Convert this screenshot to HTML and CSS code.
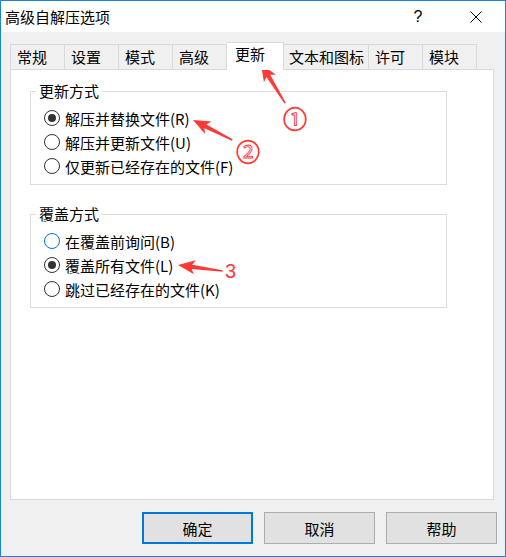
FILE: index.html
```html
<!DOCTYPE html>
<html lang="zh-CN">
<head>
  <meta charset="utf-8" />
  <title>高级自解压选项</title>
  <link rel="stylesheet" href="styles.css">
</head>
<body>

  <div class="window">
    <div class="titlebar">
      <span class="title">高级自解压选项</span>
      <span class="tb-btn">?</span>
      <span class="tb-btn">
        <svg width="12" height="12" viewBox="0 0 12 12"><path d="M0.5 0.5 L11.5 11.5 M11.5 0.5 L0.5 11.5" stroke="#000" stroke-width="1" fill="none"/></svg>
      </span>
    </div>

    <div class="dialog">
      <div class="tabs">
        <div class="tab first">常规</div>
        <div class="tab">设置</div>
        <div class="tab">模式</div>
        <div class="tab">高级</div>
        <div class="tab active">更新</div>
        <div class="tab wide">文本和图标</div>
        <div class="tab">许可</div>
        <div class="tab">模块</div>
      </div>

      <div class="panel">
        <div class="group">
          <div class="legend">更新方式</div>
          <div class="radio-row"><span class="radio checked"></span>解压并替换文件(R)</div>
          <div class="radio-row"><span class="radio"></span>解压并更新文件(U)</div>
          <div class="radio-row"><span class="radio"></span>仅更新已经存在的文件(F)</div>
        </div>

        <div class="group second">
          <div class="legend">覆盖方式</div>
          <div class="radio-row"><span class="radio focus"></span>在覆盖前询问(B)</div>
          <div class="radio-row"><span class="radio checked"></span>覆盖所有文件(L)</div>
          <div class="radio-row"><span class="radio"></span>跳过已经存在的文件(K)</div>
        </div>
      </div>

      <div class="buttons">
        <button class="btn default">确定</button>
        <button class="btn">取消</button>
        <button class="btn">帮助</button>
      </div>
    </div>

    <!-- red annotations drawn over the dialog -->
    <svg class="marks" width="506" height="557" viewBox="0 0 506 557">
      <g fill="#ff3838">
        <polygon transform="translate(261 64) rotate(58.4)" points="0,0 17,-7 14,-2.2 46,-0.8 46,0.8 14,2.2 17,7"/>
        <polygon transform="translate(193 120) rotate(27.1)" points="0,0 17,-7 14,-2.2 44,-0.8 44,0.8 14,2.2 17,7"/>
        <polygon transform="translate(178 265) rotate(7.6)" points="0,0 17,-7 14,-2.2 45,-0.8 45,0.8 14,2.2 17,7"/>
      </g>
      <text class="num" x="295" y="128" text-anchor="middle">①</text>
      <text class="num" x="248" y="161" text-anchor="middle">②</text>
      <text class="digit" x="225" y="278">3</text>
    </svg>
  </div>

</body>
</html>
```

FILE: styles.css
```css
:root {
  --win-border: #1883d7;
  --face:       #f0f0f0;
  --line:       #d9d9d9;
  --accent:     #0078d7;
  --mark:       #ff3838;
}
*, *::before, *::after { box-sizing: border-box; margin:0; padding:0; }
body {
  font-family: "Noto Sans CJK SC", "Noto Sans", sans-serif;
  font-size: 15px;
  color: #000;
  background: #fff;
}

.window {
  position: relative;
  width: 506px; height: 557px;
  border: 1px solid var(--win-border);
  display: flex; flex-direction: column;
  background: var(--face);
}

/* title bar */
.titlebar {
  height: 31px; background: #fff;
  display: flex; align-items: center;
  padding-left: 4px;
}
.title { flex: 1; line-height: 31px; }
.tb-btn {
  width: 58px; height: 31px;
  display: flex; align-items: center; justify-content: center;
  font-family: "Liberation Sans", sans-serif; font-size: 16px;
}

/* body */
.dialog {
  flex: 1;
  display: flex; flex-direction: column;
  padding: 10px 8px 12px 9px;
}

.tabs {
  display: flex; align-items: flex-end;
  height: 27px;
}
.tab {
  min-width: 54px; height: 25px;
  padding: 0 5px 0 6px;
  border: 1px solid var(--line); border-bottom: none; border-left: none;
  line-height: 23px;
  white-space: nowrap;
}
.tab.first { border-left: 1px solid var(--line); min-width: 55px; }
.tab.wide { padding: 0 4px 0 5px; }
.tab.active {
  position: relative; z-index: 1;
  height: 28px; margin-bottom: -1px;
  min-width: 57px; padding-left: 8px;
  background: #fff;
  line-height: 21px;
}

.panel {
  height: 431px;
  margin-right: 3px;
  background: #fff;
  border: 1px solid var(--line);
  padding: 21px 0 0 19px;
}

.group {
  width: 417px;
  border: 1px solid #dcdcdc;
  padding: 0 0 6px 13px;
}
.group.second { margin-top: 29px; }
.legend {
  width: fit-content;
  margin: -10px 0 6px -8px;
  padding: 0 3px;
  line-height: 18px;
  background: #fff;
}

.radio-row {
  height: 24px;
  display: flex; align-items: center; gap: 5px;
  white-space: nowrap;
}
.radio {
  width: 16px; height: 16px; flex: none;
  border: 1px solid #333; border-radius: 50%;
  display: flex; align-items: center; justify-content: center;
}
.radio.focus { border-color: var(--accent); }
.radio.checked::after {
  content: ""; width: 8px; height: 8px;
  border-radius: 50%; background: #333;
}

/* buttons */
.buttons {
  display: flex; justify-content: flex-end; gap: 11px;
  margin-top: 12px;
}
.btn {
  width: 111px; height: 32px;
  font: inherit; color: #000;
  background: #e1e1e1;
  border: 1px solid #adadad;
}
.btn.default { border: 2px solid var(--accent); }

/* annotations */
.marks { position: absolute; left: -1px; top: -1px; pointer-events: none; }
.marks .num {
  fill: #fff; stroke: var(--mark); stroke-width: 0.9;
  font-family: "Noto Sans CJK SC", sans-serif; font-size: 24px;
}
.marks .digit {
  fill: var(--mark);
  font-family: "Liberation Sans", sans-serif; font-size: 20px;
}
```
